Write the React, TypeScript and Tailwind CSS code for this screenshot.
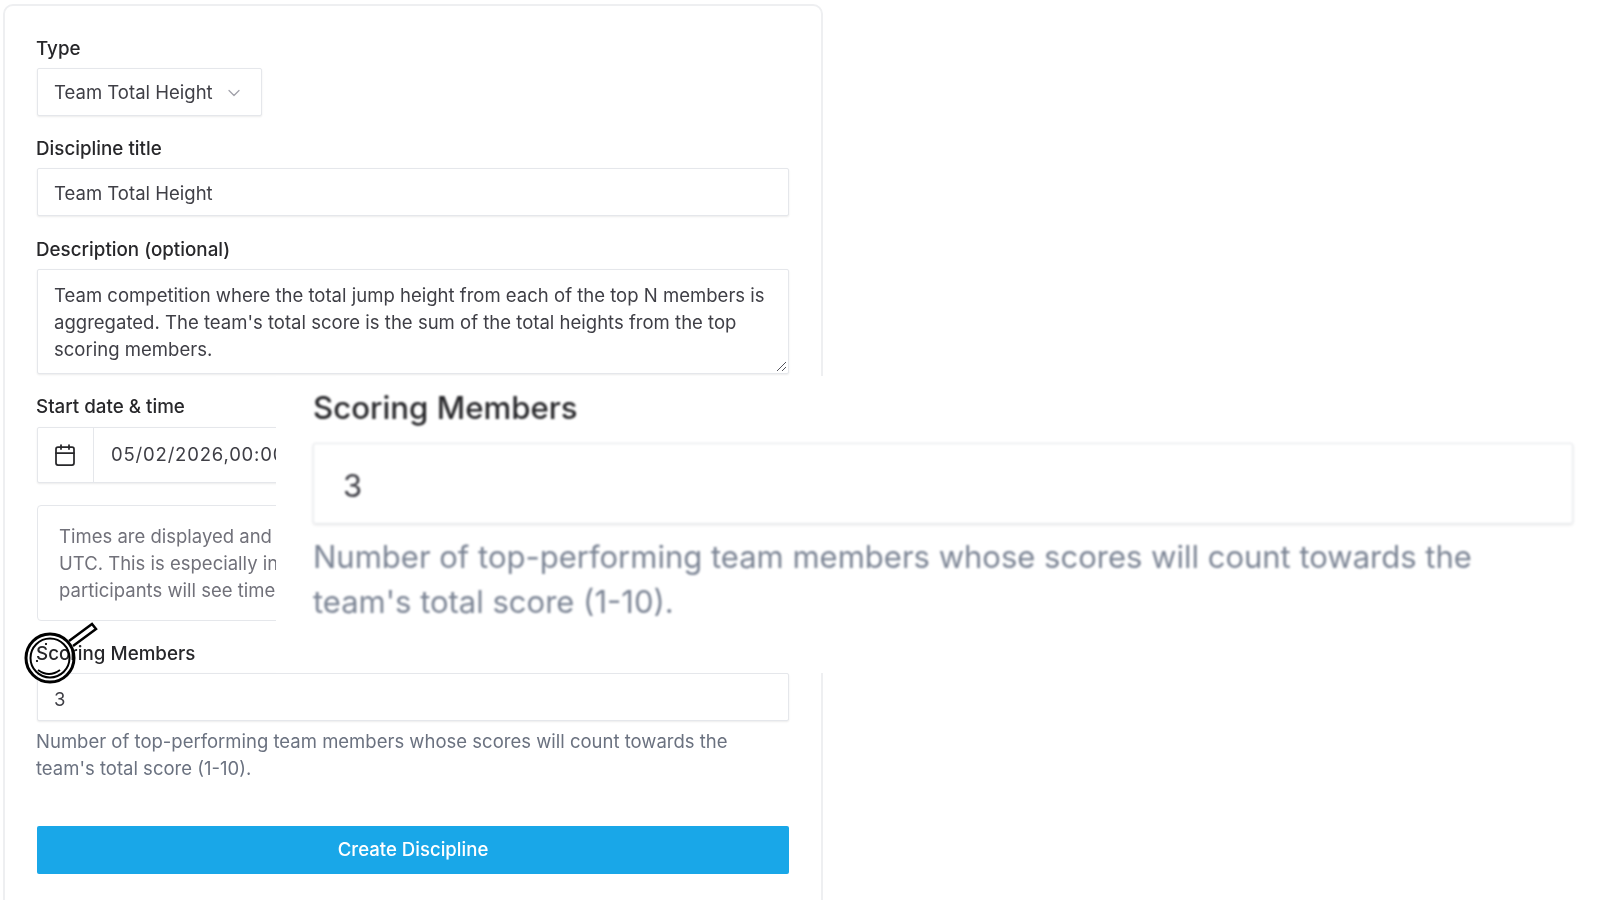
import { Calendar, ChevronDown } from "lucide-react"

const font = "font-['Inter',sans-serif]"

function Label({ children, gap = "mb-[9px]" }: { children: React.ReactNode; gap?: string }) {
  return <div className={"-ml-px h-[22px] text-[18.8px] leading-[23px] font-medium text-[#27272a] " + gap}>{children}</div>
}

function Box({ children, className = "" }: { children?: React.ReactNode; className?: string }) {
  return (
    <div className={"bg-white border border-[#e5e7eb] rounded-[2px] shadow-[0_1px_2px_rgba(0,0,0,0.08)] text-[18.55px] text-[#3f3f46] " + className}>
      {children}
    </div>
  )
}

function Magnifier() {
  return (
    <svg className="absolute left-[22px] top-[620px]" width="76" height="66" viewBox="0 0 76 66" fill="none" stroke="#000">
      <path d="M47 21 L70 4 L74 9 L51 26" fill="#fff" strokeWidth="2.5" />
      <circle cx="28" cy="38" r="24" strokeWidth="3" />
      <circle cx="28" cy="38" r="19.5" strokeWidth="2" />
      <path d="M16 50 Q27 58 38 50" strokeWidth="2" />
      <circle cx="24" cy="24" r="0.7" fill="#000" />
      <circle cx="15" cy="41" r="0.7" fill="#000" />
    </svg>
  )
}

export default function App() {
  return (
    <div className={"relative w-[1600px] h-[900px] overflow-hidden bg-white " + font}>
      <div className="blur-[0.5px]">
        <div className="ml-[3px] mt-[4px] w-[820px] h-[920px] bg-white border-2 border-[#eeeff1] rounded-[10px] px-[32px] pt-[31px]">
          <Label>Type</Label>
          <Box className="w-[225px] h-[48px] flex items-center pl-[16px] pt-[2px] gap-[11px]">
            <span>Team Total Height</span>
            <ChevronDown size={20} strokeWidth={1.5} className="text-[#a1a1aa]" />
          </Box>

          <div className="mt-[21px]">
            <Label>Discipline title</Label>
            <Box className="h-[48px] flex items-center pl-[16px] pt-[4px]">Team Total Height</Box>
          </div>

          <div className="mt-[22px]">
            <Label>Description (optional)</Label>
            <Box className="relative h-[105px] pl-[16px] pr-[16px] pt-[12px] leading-[27px]">
              Team competition where the total jump height from each of the top N members is aggregated. The team's total score is the sum of the total heights from the top scoring members.
              <svg className="absolute right-[1px] bottom-[1px]" width="12" height="12" viewBox="0 0 12 12" stroke="#52525b" fill="none">
                <path d="M2 11 L11 2 M7 11 L11 7" />
              </svg>
            </Box>
          </div>

          <div className="mt-[21px]">
            <Label gap="mb-[10px]">Start date &amp; time</Label>
            <Box className="h-[56px] flex items-center">
              <div className="w-[56px] h-full flex items-center justify-center pr-[2px] border-r border-[#e5e7eb] text-[#27272a]">
                <Calendar size={24} strokeWidth={1.75} />
              </div>
              <span className="pl-[17px] tracking-[0.8px]">05/02/2026,00:00</span>
            </Box>
          </div>

          <div className="mt-[22px] h-[116px] border border-[#e5e7eb] rounded-[4px] pl-[21px] pt-[17px] text-[18.5px] leading-[27px] text-[#71717a]">
            <div>Times are displayed and</div>
            <div>UTC. This is especially in</div>
            <div>participants will see time</div>
          </div>

          <div className="mt-[21px]">
            <Label>Scoring Members</Label>
            <Box className="h-[48px] flex items-center pl-[16px] pt-[5px]">3</Box>
          </div>

          <div className="-ml-px mt-[7px] max-w-[720px] text-[18.5px] leading-[27px] text-[#6b7280]">
            Number of top-performing team members whose scores will count towards the team's total score (1-10).
          </div>

          <button className="mt-[44px] w-full h-[48px] bg-[#19a7e8] rounded-[2px] text-white text-[18.6px] font-medium">
            Create Discipline
          </button>
        </div>
      </div>

      <div className="absolute left-[276px] top-[376px] w-[1324px] h-[297px] bg-white pl-[37px] pr-[27px] pt-[14px]">
        <div className="blur-[0.8px]">
          <div className="text-[31.2px] leading-[36px] font-medium text-[#27272a]">Scoring Members</div>
          <div className="mt-[17px] h-[81px] bg-white border border-[#e5e7eb] rounded-[2px] shadow-[0_1px_3px_rgba(0,0,0,0.1)] flex items-center pl-[29px] pt-[5px] text-[31px] text-[#3f3f46]">3</div>
          <div className="mt-[10px] max-w-[1200px] text-[31px] leading-[45px] text-[#7b8494]">
            Number of top-performing team members whose scores will count towards the team's total score (1-10).
          </div>
        </div>
      </div>

      <Magnifier />
    </div>
  )
}
